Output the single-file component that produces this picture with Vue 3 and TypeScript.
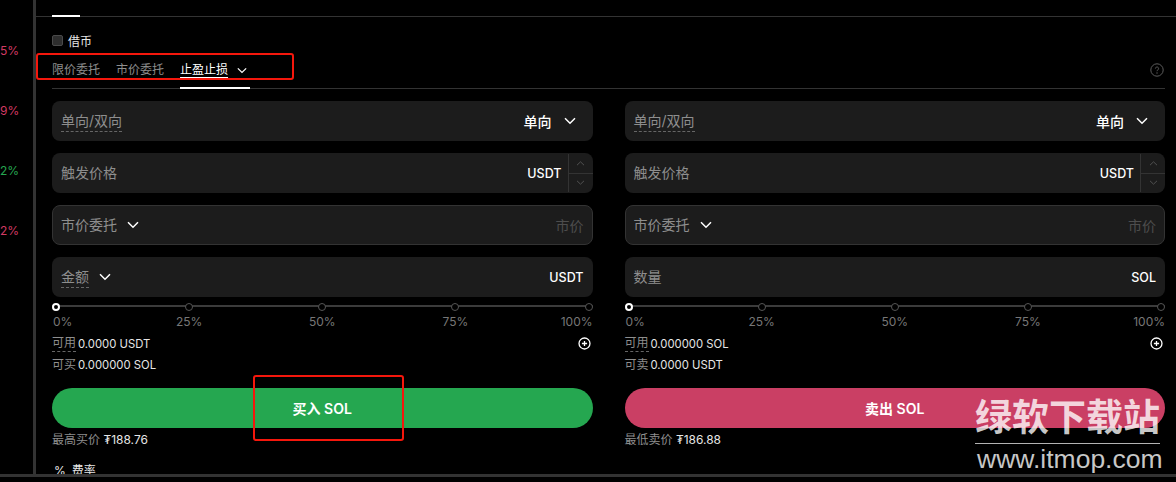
<script setup lang="ts">
interface Field { label: string; dashed?: boolean; caret?: boolean; value: string; valueCls?: string; chev?: boolean; stepper?: boolean; bordered?: boolean }
interface Col { fields: Field[]; avail: [string, string, boolean][]; btn: string; btnCls: string; priceLabel: string; price: string }
const marks = ['0%', '25%', '50%', '75%', '100%']
const pcts = [
  { t: '5%', c: 'red' }, { t: '9%', c: 'red' }, { t: '2%', c: 'green' }, { t: '2%', c: 'red' },
]
const base = (last: Field): Field[] => [
  { label: '单向/双向', dashed: true, value: '单向', valueCls: 'cn', chev: true },
  { label: '触发价格', value: 'USDT', stepper: true },
  { label: '市价委托', caret: true, value: '市价', valueCls: 'dim', bordered: true },
  last,
]
const cols: Col[] = [
  {
    fields: base({ label: '金额', dashed: true, caret: true, value: 'USDT' }),
    avail: [['可用', '0.0000 USDT', true], ['可买', '0.000000 SOL', false]],
    btn: '买入 SOL', btnCls: 'buy', priceLabel: '最高买价', price: '₮188.76',
  },
  {
    fields: base({ label: '数量', value: 'SOL' }),
    avail: [['可用', '0.000000 SOL', true], ['可卖', '0.0000 USDT', false]],
    btn: '卖出 SOL', btnCls: 'sell', priceLabel: '最低卖价', price: '₮186.88',
  },
]
</script>

<template>
  <div class="screen">
    <div class="page">
      <aside class="side">
        <div v-for="(p, i) in pcts" :key="i" class="pct" :class="p.c">{{ p.t }}</div>
      </aside>
      <main class="main">
        <div class="top"><span class="top-active"></span></div>
        <div class="body">
          <label class="check"><span class="box"></span>借币</label>
          <nav class="tabs">
            <span class="tab">限价委托</span>
            <span class="tab">市价委托</span>
            <span class="tab active">
              <span class="tab-text">止盈止损</span>
              <svg class="tab-chev" viewBox="0 0 12 8" width="10" height="7"><path d="M1 1.5 6 6.3 11 1.5" fill="none" stroke="#fff" stroke-width="1.5" /></svg>
            </span>
            <svg class="help" viewBox="0 0 14 14" width="14" height="14">
              <circle cx="7" cy="7" r="6.2" fill="none" stroke="#5c5c5c" stroke-width="1" />
              <path d="M5.4 5.6a1.6 1.6 0 1 1 2.5 1.3c-.6.4-.9.7-.9 1.3" fill="none" stroke="#5c5c5c" stroke-width="1" />
              <circle cx="7" cy="10" r=".7" fill="#5c5c5c" />
            </svg>
          </nav>
          <div class="grid">
            <section v-for="(c, ci) in cols" :key="ci" class="col">
              <div class="fields">
                <div v-for="(f, fi) in c.fields" :key="fi" class="field" :class="{ bordered: f.bordered, step: f.stepper }">
                  <span class="lbl" :class="{ dashed: f.dashed }">{{ f.label }}</span>
                  <svg v-if="f.caret" class="caret" viewBox="0 0 12 8" width="12" height="8"><path d="M1 1.2 6 6.2 11 1.2" fill="none" stroke="#fff" stroke-width="1.5" /></svg>
                  <span class="val" :class="f.valueCls">{{ f.value }}</span>
                  <svg v-if="f.chev" class="chev" viewBox="0 0 12 8" width="12" height="8"><path d="M1 1.2 6 6.2 11 1.2" fill="none" stroke="#fff" stroke-width="1.5" /></svg>
                  <div v-if="f.stepper" class="stepper">
                    <div class="st"><svg viewBox="0 0 10 6" width="9" height="5"><path d="M.8 5 5 1 9.2 5" fill="none" stroke="#555" stroke-width="1.1" /></svg></div>
                    <div class="st"><svg viewBox="0 0 10 6" width="9" height="5"><path d="M.8 1 5 5 9.2 1" fill="none" stroke="#555" stroke-width="1.1" /></svg></div>
                  </div>
                </div>
              </div>
              <div class="slider">
                <div class="track">
                  <span v-for="(m, mi) in marks" :key="m" class="dot" :class="{ on: mi === 0 }"></span>
                </div>
                <div class="marks"><span v-for="m in marks" :key="m">{{ m }}</span></div>
              </div>
              <div class="avail">
                <div v-for="(a, ai) in c.avail" :key="ai" class="av-row">
                  <span class="av-l" :class="{ dashed: a[2] }">{{ a[0] }}</span>
                  <span class="av-v">{{ a[1] }}</span>
                  <svg v-if="ai === 0" class="plus" viewBox="0 0 14 14" width="13" height="13">
                    <circle cx="7" cy="7" r="5.9" fill="none" stroke="#fff" stroke-width="1.4" />
                    <path d="M7 4.2v5.6M4.2 7h5.6" stroke="#fff" stroke-width="1.4" />
                  </svg>
                </div>
              </div>
              <button class="btn" :class="c.btnCls">{{ c.btn }}</button>
              <div class="price"><span class="p-l">{{ c.priceLabel }}</span> <span class="p-v">{{ c.price }}</span></div>
            </section>
          </div>
          <div class="fee"><span class="fee-i">%</span>费率</div>
        </div>
      </main>
    </div>
    <div class="mark mark-tabs"></div>
    <div class="mark mark-btn"></div>
    <div class="wm">
      <div class="wm-cn">绿软下载站</div>
      <div class="wm-en">www.itmop.com</div>
    </div>
  </div>
</template>

<style scoped>
.screen { position: relative; width: 1176px; height: 482px; background: #000; overflow: hidden; font-family: Inter, "Noto Sans CJK SC", sans-serif; color: #fff; }
.page { display: flex; height: 477px; border-bottom: 3px solid #333; box-sizing: border-box; overflow: hidden; }
.side { width: 33px; flex: none; padding-top: 21px; box-sizing: border-box; }
.pct { height: 60px; line-height: 60px; font-size: 12px; text-align: right; padding-right: 16px; }
.red { color: #d13a63; }
.green { color: #25a750; }
.main { flex: 1; min-width: 0; border-left: 3px solid #333; height: 474px; overflow: hidden; }
.top { height: 16px; border-bottom: 1px solid #333; position: relative; }
.top-active { display: block; position: absolute; left: 16px; bottom: -1px; width: 28px; height: 2px; background: #fff; }
.body { padding: 0 11px 0 16px; }
.check { display: flex; align-items: center; gap: 5px; height: 14px; margin-top: 16px; font-size: 12px; color: #e6e6e6; }
.box { width: 11px; height: 11px; background: #2e2e2e; border: 1px solid #4a4a4a; border-radius: 2px; box-sizing: border-box; }
.tabs { display: flex; align-items: flex-start; gap: 16px; height: 31px; margin-top: 11px; border-bottom: 1px solid #333; font-size: 12px; color: #8e8e8e; position: relative; box-sizing: border-box; padding-top: 3px; }
.tab { line-height: 18px; white-space: nowrap; }
.tab.active { color: #fff; display: flex; align-items: center; width: 70px; height: 28px; position: relative; }
.tab.active::after { content: ""; position: absolute; left: 0; right: 0; bottom: 0; height: 2px; background: #fff; }
.tab-text { line-height: 18px; align-self: flex-start; text-decoration: underline; text-decoration-color: #fff; text-underline-offset: 3px; }
.tab-chev { margin-left: 9px; align-self: flex-start; margin-top: 6px; }
.help { position: absolute; right: 1px; top: 5px; }
.grid { display: grid; grid-template-columns: 1fr 1fr; gap: 32px; margin-top: 12px; }
.col { min-width: 0; }
.fields { display: flex; flex-direction: column; gap: 12px; }
.field { display: flex; align-items: center; height: 40px; padding: 0 9px; background: #1c1c1c; border-radius: 8px; box-sizing: border-box; font-size: 14px; }
.field.bordered { border: 1px solid #333; padding: 0 8px; }
.field.step { padding-right: 0; }
.lbl { color: #8e8e8e; line-height: 20px; }
.lbl.dashed, .av-l.dashed { border-bottom: 1px dashed #666; }
.caret { margin-left: 10px; }
.val { margin-left: auto; font-size: 12.5px; font-weight: 500; color: #fff; }
.val.cn { font-size: 14px; }
.val.dim { color: #4d4d4d; font-weight: 400; font-size: 14px; }
.chev { margin-left: 12px; margin-right: 8px; }
.stepper { display: flex; flex-direction: column; width: 24px; height: 38px; margin-left: 6px; border-left: 1px solid #333; }
.st { flex: 1; display: flex; align-items: center; justify-content: center; }
.st + .st { border-top: 1px solid #333; }
.slider { margin-top: 6px; }
.track { height: 7px; display: flex; justify-content: space-between; align-items: center; position: relative; }
.track::before { content: ""; position: absolute; left: 0; right: 0; top: 2px; height: 2px; background: #3b3b3b; }
.dot { width: 8px; height: 8px; border-radius: 50%; background: #000; border: 1px solid #555; box-sizing: border-box; position: relative; }
.dot.on { border: 2px solid #fff; }
.marks { display: flex; justify-content: space-between; margin-top: 5px; font-size: 12px; line-height: 14px; color: #777; }
.marks span { width: 8px; display: flex; justify-content: center; white-space: nowrap; }
.marks span:first-child { justify-content: flex-start; padding-left: 1px; box-sizing: border-box; }
.marks span:last-child { justify-content: flex-end; }
.avail { margin-top: 4px; font-size: 11.3px; }
.av-row { display: flex; align-items: center; height: 21px; line-height: 16px; }
.av-l { color: #8e8e8e; font-size: 12px; }
.av-v { margin-left: 2px; color: #e6e6e6; }
.plus { margin-left: auto; margin-right: 2px; }
.btn { display: block; width: 100%; height: 40px; margin-top: 13px; border: 0; border-radius: 20px; color: #fff; font-family: inherit; font-size: 14px; font-weight: 600; }
.buy { background: #25a750; }
.sell { background: #ca3f64; }
.price { margin-top: 3px; line-height: 17px; font-size: 12px; }
.p-l { color: #8e8e8e; font-size: 12px; }
.p-v { color: #e6e6e6; }
.fee { margin-top: 15px; margin-left: 2px; font-size: 12px; line-height: 16px; color: #e6e6e6; }
.fee-i { margin-right: 6px; }
.mark { position: absolute; border: 2px solid #f5170c; border-radius: 3px; box-sizing: border-box; }
.mark-tabs { left: 36px; top: 53px; width: 258px; height: 27px; }
.mark-btn { left: 253px; top: 375px; width: 151px; height: 66px; }
.wm { position: absolute; left: 975px; top: 394px; width: 188px; color: rgba(255, 255, 255, 0.78); }
.wm-cn { font-family: "Noto Sans CJK SC", sans-serif; font-size: 37px; line-height: 42px; font-weight: 700; white-space: nowrap; height: 42px; width: 185px; padding-bottom: 7px; border-bottom: 1px solid rgba(255, 255, 255, 0.7); }
.wm-en { font-family: "Liberation Sans", sans-serif; font-size: 26.5px; line-height: 28px; margin-top: 1px; padding-left: 2px; white-space: nowrap; }
</style>
